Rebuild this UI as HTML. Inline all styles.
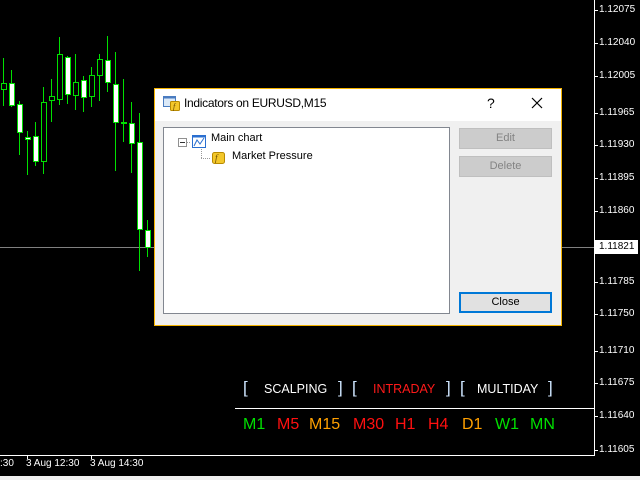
<!DOCTYPE html>
<html><head><style>
*{margin:0;padding:0;box-sizing:border-box}
body{width:640px;height:480px;background:#000;position:relative;overflow:hidden;font-family:"Liberation Sans",sans-serif}
.a{position:absolute}
.pl{position:absolute;left:599px;font-size:10px;color:#fff;line-height:12px}
.tk{position:absolute;left:594px;width:4px;height:1px;background:#fff}
.tf{position:absolute;top:416px;font-size:16px;line-height:18px}
.br{position:absolute;top:378px;font-size:17px;color:#cfe6ff;line-height:20px}
.lb{position:absolute;top:381px;font-size:12.5px;line-height:16px}
.btn{position:absolute;left:459px;width:93px;height:21px;background:#cccccc;border:1px solid #bfbfbf;color:#838383;font-size:11px;text-align:center;line-height:19px}
</style></head><body>
<svg class="a" style="left:0;top:0" width="594" height="455">
<line x1="0" y1="247.5" x2="594" y2="247.5" stroke="#808080"/>
<g stroke="#00e000" stroke-width="1">
<line x1="3.5" y1="58" x2="3.5" y2="106"/><rect x="1.5" y="83.5" width="5" height="6" fill="#000"/>
<line x1="11.5" y1="70" x2="11.5" y2="107"/><rect x="9.5" y="83.5" width="5" height="22" fill="#fff"/>
<line x1="19.5" y1="101" x2="19.5" y2="155"/><rect x="17.5" y="104.5" width="5" height="28" fill="#fff"/>
<line x1="27.5" y1="131" x2="27.5" y2="175"/><rect x="25.5" y="137.5" width="5" height="2" fill="#fff"/>
<line x1="35.5" y1="122" x2="35.5" y2="166"/><rect x="33.5" y="136.5" width="5" height="25" fill="#fff"/>
<line x1="43.5" y1="87" x2="43.5" y2="174"/><rect x="41.5" y="102.5" width="5" height="59" fill="#000"/>
<line x1="51.5" y1="79" x2="51.5" y2="122"/><rect x="49.5" y="96.5" width="5" height="4" fill="#000"/>
<line x1="59.5" y1="37" x2="59.5" y2="105"/><rect x="57.5" y="54.5" width="5" height="45" fill="#000"/>
<line x1="67.5" y1="56" x2="67.5" y2="104"/><rect x="65.5" y="57.5" width="5" height="37" fill="#fff"/>
<line x1="75.5" y1="54" x2="75.5" y2="110"/><rect x="73.5" y="82.5" width="5" height="13" fill="#000"/>
<line x1="83.5" y1="76" x2="83.5" y2="112"/><rect x="81.5" y="80.5" width="5" height="17" fill="#fff"/>
<line x1="91.5" y1="67" x2="91.5" y2="107"/><rect x="89.5" y="75.5" width="5" height="21" fill="#000"/>
<line x1="99.5" y1="54" x2="99.5" y2="101"/><rect x="97.5" y="59.5" width="5" height="16" fill="#000"/>
<line x1="107.5" y1="36" x2="107.5" y2="92"/><rect x="105.5" y="60.5" width="5" height="22" fill="#fff"/>
<line x1="115.5" y1="52" x2="115.5" y2="171"/><rect x="113.5" y="84.5" width="5" height="38" fill="#fff"/>
<line x1="123.5" y1="79" x2="123.5" y2="142"/><rect x="121.5" y="122.5" width="5" height="1" fill="#fff"/>
<line x1="131.5" y1="102" x2="131.5" y2="173"/><rect x="129.5" y="123.5" width="5" height="20" fill="#fff"/>
<line x1="139.5" y1="113" x2="139.5" y2="271"/><rect x="137.5" y="142.5" width="5" height="87" fill="#fff"/>
<line x1="147.5" y1="220" x2="147.5" y2="257"/><rect x="145.5" y="230.5" width="5" height="17" fill="#fff"/>
</g>
</svg>
<div class="a" style="left:594px;top:0;width:1px;height:456px;background:#fff"></div>
<div class="a" style="left:0;top:455px;width:595px;height:1px;background:#fff"></div>
<div class="a" style="left:0;top:476px;width:640px;height:4px;background:#f0f0f0"></div>
<div class="a" style="left:27px;top:455px;width:1px;height:4px;background:#fff"></div>
<div class="a" style="left:91px;top:455px;width:1px;height:4px;background:#fff"></div>
<div class="a" style="left:0;top:458px;font-size:10px;color:#fff;line-height:12px">:30</div>
<div class="a" style="left:26px;top:458px;font-size:10px;color:#fff;line-height:12px">3 Aug 12:30</div>
<div class="a" style="left:90px;top:458px;font-size:10px;color:#fff;line-height:12px">3 Aug 14:30</div>

<div class="tk" style="top:10px"></div><div class="pl" style="top:4px">1.12075</div>
<div class="tk" style="top:43px"></div><div class="pl" style="top:37px">1.12040</div>
<div class="tk" style="top:76px"></div><div class="pl" style="top:70px">1.12005</div>
<div class="tk" style="top:113px"></div><div class="pl" style="top:107px">1.11965</div>
<div class="tk" style="top:145px"></div><div class="pl" style="top:139px">1.11930</div>
<div class="tk" style="top:178px"></div><div class="pl" style="top:172px">1.11895</div>
<div class="tk" style="top:211px"></div><div class="pl" style="top:205px">1.11860</div>
<div class="a" style="left:595px;top:240px;width:43px;height:14px;background:#fff"></div><div class="pl" style="top:241px;color:#000">1.11821</div>
<div class="tk" style="top:282px"></div><div class="pl" style="top:276px">1.11785</div>
<div class="tk" style="top:314px"></div><div class="pl" style="top:308px">1.11750</div>
<div class="tk" style="top:351px"></div><div class="pl" style="top:345px">1.11710</div>
<div class="tk" style="top:383px"></div><div class="pl" style="top:377px">1.11675</div>
<div class="tk" style="top:416px"></div><div class="pl" style="top:410px">1.11640</div>
<div class="tk" style="top:450px"></div><div class="pl" style="top:444px">1.11605</div>

<div class="br" style="left:243px">[</div>
<div class="lb" style="left:264px;color:#fff">SCALPING</div>
<div class="br" style="left:338px">]</div>
<div class="br" style="left:352px">[</div>
<div class="lb" style="left:373px;color:#ff1a1a">INTRADAY</div>
<div class="br" style="left:446px">]</div>
<div class="br" style="left:460px">[</div>
<div class="lb" style="left:477px;color:#fff">MULTIDAY</div>
<div class="br" style="left:548px">]</div>
<div class="a" style="left:235px;top:408px;width:359px;height:1px;background:#fff"></div>
<div class="tf" style="left:243px;color:#00e000">M1</div>
<div class="tf" style="left:277px;color:#ff1010">M5</div>
<div class="tf" style="left:309px;color:#ffa000">M15</div>
<div class="tf" style="left:353px;color:#ff1010">M30</div>
<div class="tf" style="left:395px;color:#ff1010">H1</div>
<div class="tf" style="left:428px;color:#ff1010">H4</div>
<div class="tf" style="left:462px;color:#ffa000">D1</div>
<div class="tf" style="left:495px;color:#00e000">W1</div>
<div class="tf" style="left:530px;color:#00e000">MN</div>

<!-- dialog -->
<div class="a" style="left:154px;top:88px;width:408px;height:238px;background:#f0f0f0;border:1px solid #f5b400">
 <div class="a" style="left:0;top:0;width:406px;height:32px;background:#fff"></div>
 <svg class="a" style="left:8px;top:5px" width="18" height="18">
  <rect x="0.5" y="2.5" width="12" height="10" fill="#dbe9f7" stroke="#4a7cc0"/>
  <rect x="0.5" y="2.5" width="12" height="2" fill="#4a7cc0"/>
  <rect x="7.5" y="7.5" width="9" height="9" rx="1" fill="#f3c72a" stroke="#b88a00"/>
  <text x="10" y="15" font-size="8" font-style="italic" fill="#6a4a00" font-family="Liberation Serif">f</text>
 </svg>
 <div class="a" style="left:29px;top:7px;font-size:12px;letter-spacing:-0.3px;color:#000">Indicators on EURUSD,M15</div>
 <div class="a" style="left:332px;top:6px;font-size:14px;color:#000">?</div>
 <svg class="a" style="left:376px;top:8px" width="12" height="12"><path d="M1 1L11 11M11 1L1 11" stroke="#000" stroke-width="1.2"/></svg>
 <div class="a" style="left:8px;top:38px;width:287px;height:187px;background:#fff;border:1px solid #828790"></div>
 <svg class="a" style="left:18px;top:43px" width="150" height="32">
  <rect x="5.5" y="6.5" width="8" height="8" fill="#fff" stroke="#909090"/>
  <line x1="7" y1="10.5" x2="12" y2="10.5" stroke="#333"/>
  <line x1="14" y1="10.5" x2="18" y2="10.5" stroke="#999" stroke-dasharray="1 1"/>
  <line x1="28.5" y1="17" x2="28.5" y2="26" stroke="#999" stroke-dasharray="1 1"/>
  <line x1="28" y1="26.5" x2="38" y2="26.5" stroke="#999" stroke-dasharray="1 1"/>
  <rect x="19.5" y="3.5" width="13" height="12" fill="#fff" stroke="#2a6fd0"/>
  <rect x="19.5" y="3.5" width="13" height="2" fill="#2a6fd0"/>
  <path d="M21 14 L24 8 L27 12 L31 6" stroke="#2a6fd0" fill="none"/>
  <rect x="39.5" y="20.5" width="12" height="11" rx="2" fill="#f3c72a" stroke="#b88a00"/>
  <text x="42" y="29" font-size="9" font-style="italic" fill="#6a4a00" font-family="Liberation Serif">f</text>
 </svg>
 <div class="a" style="left:56px;top:43px;font-size:11px;color:#000">Main chart</div>
 <div class="a" style="left:77px;top:61px;font-size:11px;color:#000">Market Pressure</div>
 <div class="btn" style="left:304px;top:39px">Edit</div>
 <div class="btn" style="left:304px;top:67px">Delete</div>
 <div class="btn" style="left:304px;top:203px;background:#e1e1e1;border:2px solid #0078d7;color:#000;line-height:17px">Close</div>
</div>
</body></html>
